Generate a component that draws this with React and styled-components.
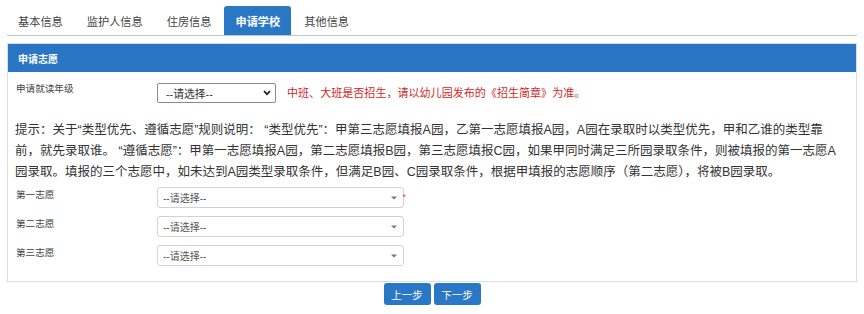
import React from "react";
import styled, { createGlobalStyle } from "styled-components";

const Global = createGlobalStyle`
  html, body { margin: 0; padding: 0; background: #fff; }
  body { font-family: "Liberation Sans", "Noto Sans CJK SC", sans-serif; color: #333; }
  * { box-sizing: border-box; }
`;

const Page = styled.div`
  padding: 6px 7px 0;
  width: 864px;
`;

const TabBar = styled.div`
  display: flex;
  border-bottom: 1px solid #b7c7d7;
  height: 30px;
`;

const Tab = styled.div`
  height: 29px;
  padding: 0 11px;
  margin-right: 2px;
  display: flex;
  align-items: center;
  font-size: 11.2px;
  color: ${(p) => (p.$active ? "#fff" : "#444")};
  font-weight: ${(p) => (p.$active ? "bold" : "normal")};
  background: ${(p) => (p.$active ? "#2a77c4" : "transparent")};
  border-radius: 3px 3px 0 0;
`;

const Panel = styled.div`
  margin-top: 7px;
  border: 1px solid #dedede;
`;

const PanelHeader = styled.div`
  height: 28px;
  background: #2a76c5;
  color: #fff;
  font-weight: bold;
  font-size: 10px;
  display: flex;
  align-items: center;
  padding-left: 10px;
`;

const PanelBody = styled.div`
  padding: 11px 2px 15px 7px;
`;

const Row = styled.div`
  display: flex;
  align-items: flex-start;
`;

const Label = styled.div`
  width: 142px;
  padding-left: 1px;
  padding-top: ${(p) => p.$pt || 0}px;
  font-size: 9.6px;
  line-height: 10px;
  color: #444;
  flex: none;
`;

const NativeSelect = styled.div`
  width: 119px;
  height: 20px;
  border: 1px solid #8a8a8a;
  border-radius: 2px;
  display: flex;
  align-items: center;
  justify-content: space-between;
  padding: 0 4px 0 8px;
  font-size: 10.8px;
  color: #333;
  flex: none;
`;

const Notice = styled.div`
  margin-left: 11px;
  font-size: 11.05px;
  line-height: 20px;
  color: #d2281f;
`;

const Tip = styled.p`
  margin: 17px 0 0;
  font-size: 12.5px;
  line-height: 21px;
  color: #333;
  white-space: nowrap;
`;

const Choices = styled.div`
  margin-top: 4px;
  display: flex;
  flex-direction: column;
  gap: 8px;
`;

const SelectBox = styled.div`
  position: relative;
  width: 247px;
  height: 21px;
  border: 1px solid #d2d2d2;
  border-radius: 3px;
  display: flex;
  align-items: center;
  justify-content: space-between;
  padding: 0 6px 0 5px;
  font-size: 10px;
  color: #555;
  flex: none;
`;

const Required = styled.span`
  position: absolute;
  right: -3px;
  top: 5px;
  font-size: 9px;
  color: #e5484d;
  line-height: 8px;
`;

const Buttons = styled.div`
  display: flex;
  justify-content: center;
  gap: 3px;
  margin-top: 1px;
`;

const Button = styled.button`
  width: 47px;
  height: 22px;
  border: none;
  border-radius: 3px;
  background: #2a78c5;
  color: #fff;
  font-family: inherit;
  font-size: 10.5px;
  padding: 0;
`;

const Chevron = () => (
  <svg width="8" height="6" viewBox="0 0 8 6">
    <path d="M1 1.2 L4 4.2 L7 1.2" fill="none" stroke="#222" strokeWidth="1.7" />
  </svg>
);

const Caret = () => (
  <svg width="6" height="4" viewBox="0 0 6 4">
    <path d="M0 0.5 H6 L3 3.5 Z" fill="#777" />
  </svg>
);

const tabs = ["基本信息", "监护人信息", "住房信息", "申请学校", "其他信息"];
const choices = ["第一志愿", "第二志愿", "第三志愿"];

export default function App() {
  return (
    <>
      <Global />
      <Page>
        <TabBar>
          {tabs.map((t) => (
            <Tab key={t} $active={t === "申请学校"}>
              {t}
            </Tab>
          ))}
        </TabBar>
        <Panel>
          <PanelHeader>申请志愿</PanelHeader>
          <PanelBody>
            <Row>
              <Label $pt={1}>申请就读年级</Label>
              <NativeSelect>
                <span>--请选择--</span>
                <Chevron />
              </NativeSelect>
              <Notice>中班、大班是否招生，请以幼儿园发布的《招生简章》为准。</Notice>
            </Row>
            <Tip>
              提示：关于“类型优先、遵循志愿”规则说明： “类型优先”：甲第三志愿填报A园，乙第一志愿填报A园，A园在录取时以类型优先，甲和乙谁的类型靠
              <br />
              前，就先录取谁。 “遵循志愿”：甲第一志愿填报A园，第二志愿填报B园，第三志愿填报C园，如果甲同时满足三所园录取条件，则被填报的第一志愿A
              <br />
              园录取。填报的三个志愿中，如未达到A园类型录取条件，但满足B园、C园录取条件，根据甲填报的志愿顺序（第二志愿），将被B园录取。
            </Tip>
            <Choices>
              {choices.map((c, i) => (
                <Row key={c}>
                  <Label $pt={3}>{c}</Label>
                  <SelectBox>
                    <span>--请选择--</span>
                    <Caret />
                    {i === 0 && <Required>*</Required>}
                  </SelectBox>
                </Row>
              ))}
            </Choices>
          </PanelBody>
        </Panel>
        <Buttons>
          <Button>上一步</Button>
          <Button>下一步</Button>
        </Buttons>
      </Page>
    </>
  );
}
